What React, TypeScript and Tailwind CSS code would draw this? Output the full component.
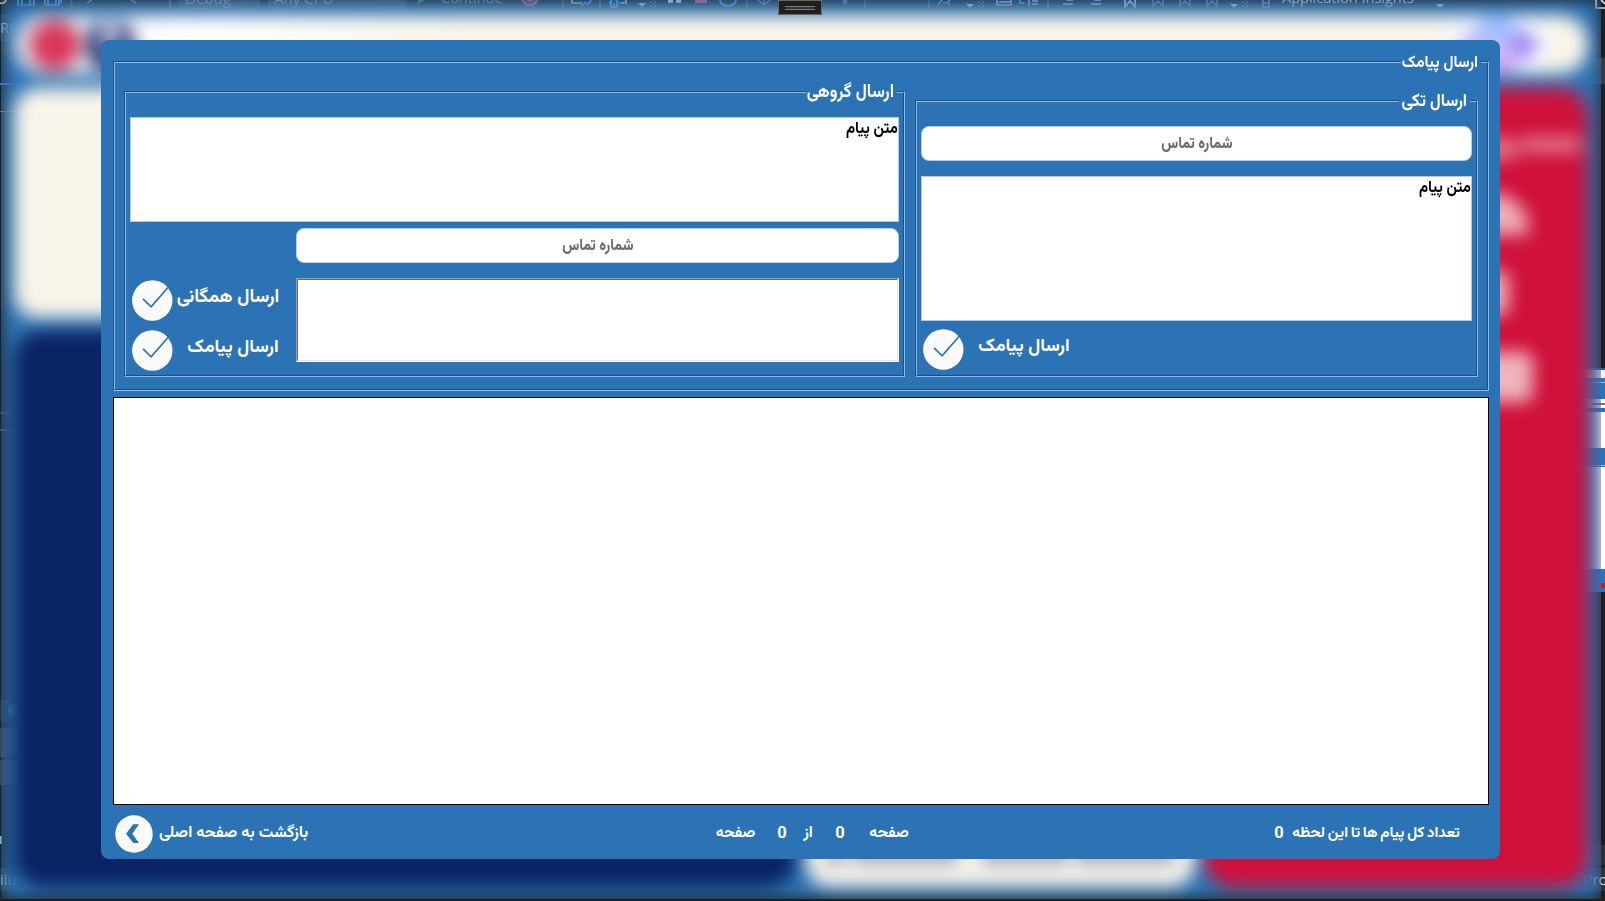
import React from "react";

type Kids = { children?: React.ReactNode; className?: string };

function CheckCircle() {
  return (
    <svg className="block h-[41px] w-[41px] shrink-0" viewBox="0 0 41 41">
      <circle cx="20.3" cy="20.5" r="20.2" fill="#fafafa" />
      <path d="M11 18.9 L19.1 26.8 L36.7 6.8" fill="none" stroke="#2c73b5" strokeWidth="1.7" />
    </svg>
  );
}

function BackCircle() {
  return (
    <svg className="block h-[38px] w-[38px] shrink-0" viewBox="0 0 38 38">
      <circle cx="19" cy="19" r="18.7" fill="#fafafa" />
      <path d="M18.3 9.2H24L17.3 18.8L24 28H18.3L11 18.8Z" fill="#2c73b5" />
    </svg>
  );
}

/* Etched frame: a dark and a light hairline side by side. */
function Group({ children, className }: Kids) {
  return (
    <section
      className={`relative border border-t-[#1d4f80] border-l-[#1d4f80] border-r-[#8fbce3] border-b-[#8fbce3] ${className}`}
    >
      <div className="h-full border border-t-[#8fbce3] border-l-[#8fbce3] border-r-[#1d4f80] border-b-[#1d4f80]">
        {children}
      </div>
    </section>
  );
}

function Legend({ children, className }: Kids) {
  return (
    <h2
      className={`absolute -top-[12px] right-[7px] flex h-6 items-center justify-end bg-[#2c73b5] pt-[3px] pr-[3px] font-bold whitespace-nowrap text-white ${className}`}
    >
      <span className="block shrink-0 origin-right scale-y-110">{children}</span>
    </h2>
  );
}

function Label({ children, className }: Kids) {
  return (
    <span className={`flex items-center justify-center font-bold whitespace-nowrap text-white ${className}`}>
      <span className="block shrink-0">{children}</span>
    </span>
  );
}

function PhoneField() {
  return (
    <div className="flex h-[35px] items-center justify-center rounded-[8px] border border-[#b5cfe8] bg-white pt-[3px] text-[15px] font-extrabold text-[#6d6d6d]">
      <span className="block scale-x-[.94] scale-y-[1.1]">شماره تماس</span>
    </div>
  );
}

function MessageField({ className }: Kids) {
  return (
    <div
      className={`flex items-start justify-end border border-[#b5c9e0] bg-white text-[16px] leading-[23px] font-bold text-black ${className}`}
    >
      <span className="block origin-right scale-x-[.93] scale-y-105">متن پیام</span>
    </div>
  );
}

function ToolbarIcons() {
  return (
    <svg className="absolute top-0 left-0 h-[16px] w-[1605px]" viewBox="0 0 1605 16" fill="none" strokeWidth="1.6">
      <path d="M0 3Q5 4 6 0" stroke="#e0d0a0" />
      <path d="M18 0V5H34V0M22 0V4M30 0V4M45 0V5H59V0M48 0V4M56 0V4M61 0V3" stroke="#4aa8ff" />
      <path d="M71.5 0V8M170 0V8M563 0V8M600 0V8M747 0V8M865 0V8M929 0V8M1048 0V8" stroke="#5a5a5a" />
      <path d="M87 3L92 0M131 0L136 3" stroke="#777" />
      <path d="M418 0V4L425 0Z" fill="#587058" />
      <path d="M523 -1A7 6 0 0 0 537 -1" stroke="#d0426a" strokeWidth="3" />
      <path d="M526 -1A4 3 0 0 0 534 -1Z" fill="#a0506a" />
      <path d="M572 0V3H582" stroke="#d7c89a" />
      <path d="M581 6L586 2M591 0A5 5 0 0 1 586 4M609 3L614-2L619 3M611 1V7H617V1M614 7V3M720 0A8 6 0 0 0 736 0" stroke="#4aa8ff" />
      <path d="M620 3H626V0" stroke="#ccc" />
      <path d="M638 3H646L642 7ZM966 4H974L970 8ZM1230 4H1238L1234 8ZM1436 4H1444L1440 8ZM668 0H673V3H668ZM676 0H681V3H676Z" fill="#d0dbe6" />
      <path d="M651 2h1M655 2h1M653 4h1M651 6h1M655 6h1M979 2h1M983 2h1M981 4h1M979 6h1M983 6h1M1243 2h1M1247 2h1M1245 4h1M1243 6h1M1247 6h1" stroke="#999" />
      <path d="M695 0H707V3H695Z" fill="#e0506c" />
      <path d="M758 0L764 5L770 0M764 0V5" stroke="#6d7d8c" />
      <circle cx="845" cy="2" r="2.5" fill="#5d6d7c" />
      <path d="M938 5L942 0M943 3H947L950 0M949 3V5M1020 0V3H1025" stroke="#4a98ff" />
      <path d="M997 0V5H1011V0M999 2H1010M1029 0V6M1032 1H1038M1032 4H1038M1066 0H1073M1063 4H1073M1094 0H1101M1091 4H1101" stroke="#b7c4d0" />
      <path d="M1125 0V7L1130 1L1135 7V0" stroke="#d9e3ec" />
      <path d="M1153 0V6L1158 1L1163 6V0M1180 0V6L1185 1L1190 6V0M1207 0V6L1212 1L1217 6V0" stroke="#66737f" />
      <path d="M1263 0V7H1269V0M1263 3H1269" stroke="#9a6ad8" />
      <path d="M1596 0V8H1605M1601 0L1605 4" stroke="#e4e4e4" />
    </svg>
  );
}

/* Editor window that lies behind everything else. */
function EditorWindow() {
  return (
    <div className="absolute inset-0 flex flex-col justify-between overflow-hidden bg-[#1f1f1f] font-['Open_Sans','Noto_Sans',sans-serif] text-[15px] text-[#d6d6d6]">
      <div className="flex h-[10px] items-start leading-[10px] whitespace-nowrap">
        <span className="ml-[179px] h-[10px] w-[81px] bg-[#3c3c3c] text-[#999]">
          <span className="relative -top-[7px] pl-1.5">Debug</span>
        </span>
        <span className="ml-2 h-[10px] w-[138px] bg-[#3c3c3c] text-[#999]">
          <span className="relative -top-[7px] pl-1.5">Any CPU</span>
        </span>
        <span className="relative -top-[7px] ml-[35px] w-[841px] text-[14.5px] text-[#888]">Continue</span>
        <span className="relative -top-[7px] text-[14.5px]">Application Insights</span>
      </div>
      <div className="mb-[10px] flex h-[23px] items-center justify-between bg-[#333] whitespace-nowrap">
        <span>ilures</span>
        <span className="w-[53px]">Live Pro</span>
      </div>
      <ToolbarIcons />
      <div className="absolute top-[14px] left-0 h-[27px] w-20 bg-[#333] leading-[27px]">RM</div>
      <div className="absolute top-[83px] left-0 h-[2px] w-20 bg-[#7160e8]" />
      <div className="absolute top-[111px] left-0 h-px w-20 bg-[#777]" />
      <div className="absolute top-[412px] left-0 h-[2px] w-20 bg-[#444]" />
      <div className="absolute top-[429px] left-0 h-[2px] w-20 bg-[#4c4c4c]" />
      <div className="absolute top-[700px] left-0 flex w-20 flex-col gap-[3px]">
        <div className="flex h-[21px] items-center bg-[#303030] pl-[8px]">
          <div className="h-[13px] w-[13px] rounded-full bg-[#4fae8f]" />
        </div>
        <div className="mt-1 h-[29px] bg-[#404040]" />
        <div className="h-[25px] bg-[#404040]" />
      </div>
      <div className="absolute top-[836px] left-0 h-[8px] w-[2px] bg-[#7fb0b0]" />
      <div className="absolute top-[58px] right-0 h-[26px] w-8 bg-[#3c3c3c]" />
      <div className="absolute top-[845px] right-0 h-[20px] w-8 bg-[#303030]" />
      <div className="absolute top-[368px] right-0 flex w-9 flex-col bg-[#2c73b5]">
        <div className="h-[2px] bg-[#2c5c88]" />
        <div className="h-[8px] bg-[#f3f1ea]" />
        <div className="mt-1 h-px bg-[#8fbce3]" />
        <div className="mt-4 flex h-[9px] items-center justify-end bg-white">
          <div className="h-[2px] w-[14px] bg-[#777]" />
        </div>
        <div className="mt-1 h-[36px] bg-white" />
        <div className="mt-[17px] h-px bg-[#8fbce3]" />
        <div className="mt-px h-[102px] bg-white" />
        <div className="mt-[14px] ml-auto h-[5px] w-[4px] bg-[#cf103a]" />
        <div className="h-[4px]" />
      </div>
    </div>
  );
}

/* Main menu of the application, out of focus under the dialog. */
function BlurredMenu() {
  return (
    <div className="absolute top-0 left-px h-[899px] w-[1600px] overflow-hidden">
      <div className="flex h-full flex-col bg-[#2c73b5] px-[13px] pt-[15px] pb-[12px] blur-[8.5px]">
        <header className="flex h-[59px] shrink-0 items-center rounded-[28px] bg-gradient-to-r from-[#dfe3e6] via-white via-10% to-[#f8f4e9] to-30% pr-[36px] pl-[16px]">
          <div className="h-[50px] w-[50px] rounded-full bg-[#d8375b]" />
          <div className="ml-[5px] flex h-[52px] w-[50px] items-center justify-center rounded-full bg-[#323f7d]">
            <div className="mb-6 h-[30px] w-[16px] bg-[#c4cbe0]" />
          </div>
          <div className="ml-auto flex h-[57px] w-[110px] items-center justify-center rounded-full bg-[#f8f8fb]">
            <svg className="h-[68px] w-[92px]" viewBox="0 0 76 60">
              <path d="M38 0L62 19L46 30L34 28L14 19Z" fill="#9dbcff" />
              <path d="M14 19L0 32L18 42L34 28Z" fill="#c3b4f8" />
              <path d="M62 15L76 31L60 45L46 30Z" fill="#9f83f4" />
              <path d="M18 42L36 60L60 45L42 36Z" fill="#c89cf6" />
              <path d="M34 28H46V38H30Z" fill="#d8c8fa" />
            </svg>
          </div>
        </header>
        <div className="mt-[14px] flex min-h-0 flex-1 gap-[10px]">
          <div className="flex w-[782px] flex-col gap-[12px]">
            <div className="h-[230px] shrink-0 rounded-[24px] bg-[#f8f4e9]" />
            <div className="flex-1 rounded-[28px] bg-[#0a2463]" />
          </div>
          <div className="flex w-[389px] flex-col justify-end rounded-[24px] bg-[#f8f4e9] px-5 pb-[24px]">
            <div className="flex h-[14px] gap-2">
              <div className="w-5 bg-[#8c93b5]" />
              <div className="w-[104px] bg-[#8c93b5]" />
              <div className="ml-4 w-[86px] bg-[#8c93b5]" />
              <div className="flex-1 bg-[#8c93b5]" />
            </div>
          </div>
          <div className="flex flex-1 flex-col rounded-[28px] bg-[#cf103a] pl-[264px]">
            <div className="mt-[46px] flex h-[26px] items-start gap-px">
              <div className="mt-[4px] h-[22px] w-[50px] rounded-full bg-[#e2748a]" />
              <div className="mt-[2px] h-[17px] w-[62px] rounded-full bg-[#e2748a]" />
            </div>
            <div className="mt-[33px] h-[42px] w-[60px] rounded-tr-[36px] bg-[#efabb8]" />
            <div className="mt-[36px] h-[44px] w-[40px] rounded-r-lg bg-[#efb0bc]" />
            <div className="mt-[37px] h-[50px] w-[64px] rounded-r-lg bg-[#efb4be]" />
          </div>
        </div>
      </div>
    </div>
  );
}

export default function App() {
  return (
    <main className="relative h-[901px] w-[1605px] overflow-hidden font-['Vazirmatn','Noto_Sans','DejaVu_Sans',sans-serif]">
      <EditorWindow />
      <BlurredMenu />

      <div className="absolute top-0 left-[778px] flex h-[15px] w-[44px] flex-col items-center justify-center border border-[#666] bg-[#1f1f1f]">
        <div className="h-[4px] w-[30px] border-y border-[#777] bg-[#333]" />
      </div>

      <div className="absolute top-[40px] left-[101px] flex h-[819px] w-[1399px] flex-col rounded-[8px] bg-[#2c73b5] px-[12px] pt-[21px] pr-[11px]">
        <Group className="h-[330px] shrink-0">
          <Legend className="w-[80px] text-[15.2px]">ارسال پیامک</Legend>
          <div className="flex h-full items-end gap-[10px] pb-[12px] pl-[9px]">
            <Group className="h-[286px] w-[781px]">
              <Legend className="w-[91px] text-[16.8px]">ارسال گروهی</Legend>
              <div className="flex flex-col gap-[6px] pt-[24px] pr-[4px] pl-[4px]">
                <MessageField className="h-[105px]" />
                <div className="flex">
                  <div className="flex w-[166px] flex-col gap-[9px] pt-[52px] pl-[2px]">
                    <div className="flex h-[41px] gap-[4px]">
                      <CheckCircle />
                      <Label className="h-[36px] w-[102px] text-[18.5px]">ارسال همگانی</Label>
                    </div>
                    <div className="flex h-[41px] gap-[15px]">
                      <CheckCircle />
                      <Label className="h-[36px] w-[90px] text-[18.2px]">ارسال پیامک</Label>
                    </div>
                  </div>
                  <div className="flex w-[603px] flex-col gap-[15px]">
                    <PhoneField />
                    <div className="h-[84px] border border-t-[#a0a0a0] border-r-white border-b-white border-l-[#a0a0a0]">
                      <div className="h-full border border-t-[#696969] border-r-[#e3e3e3] border-b-[#e3e3e3] border-l-[#696969] bg-white" />
                    </div>
                  </div>
                </div>
              </div>
            </Group>
            <Group className="h-[277px] w-[563px]">
              <Legend className="w-[71px] text-[16.2px]">ارسال تکی</Legend>
              <div className="flex flex-col pt-[24px] pr-[4px] pl-[4px]">
                <PhoneField />
                <MessageField className="mt-[15px] h-[145px]" />
                <div className="mt-[8px] flex gap-[15px] pl-[2px]">
                  <CheckCircle />
                  <Label className="h-[36px] w-[90px] text-[18.2px]">ارسال پیامک</Label>
                </div>
              </div>
            </Group>
          </div>
        </Group>

        <div className="mt-[6px] h-[408px] shrink-0 border border-black bg-white" />

        <footer className="flex h-[54px] items-center pt-[3px] pl-[2px] text-[15.5px]">
          <BackCircle />
          <Label className="ml-[6px] w-[149px] pt-px text-[16px]">بازگشت به صفحه اصلی</Label>
          <Label className="ml-[408px] w-[39px] pt-px">صفحه</Label>
          <Label className="ml-[22px] w-[10px] pt-px text-[16.5px]">0</Label>
          <Label className="ml-[14px] w-[14px] pt-px">از</Label>
          <Label className="ml-[20px] w-[10px] pt-px text-[16.5px]">0</Label>
          <Label className="ml-[24px] w-[40px] pt-px">صفحه</Label>
          <Label className="ml-[365px] w-[10px] pt-px text-[16.5px]">0</Label>
          <Label className="ml-[8px] w-[168px] pt-px text-[15px] [word-spacing:-1px]">تعداد کل پیام ها تا این لحظه</Label>
        </footer>
      </div>
    </main>
  );
}
